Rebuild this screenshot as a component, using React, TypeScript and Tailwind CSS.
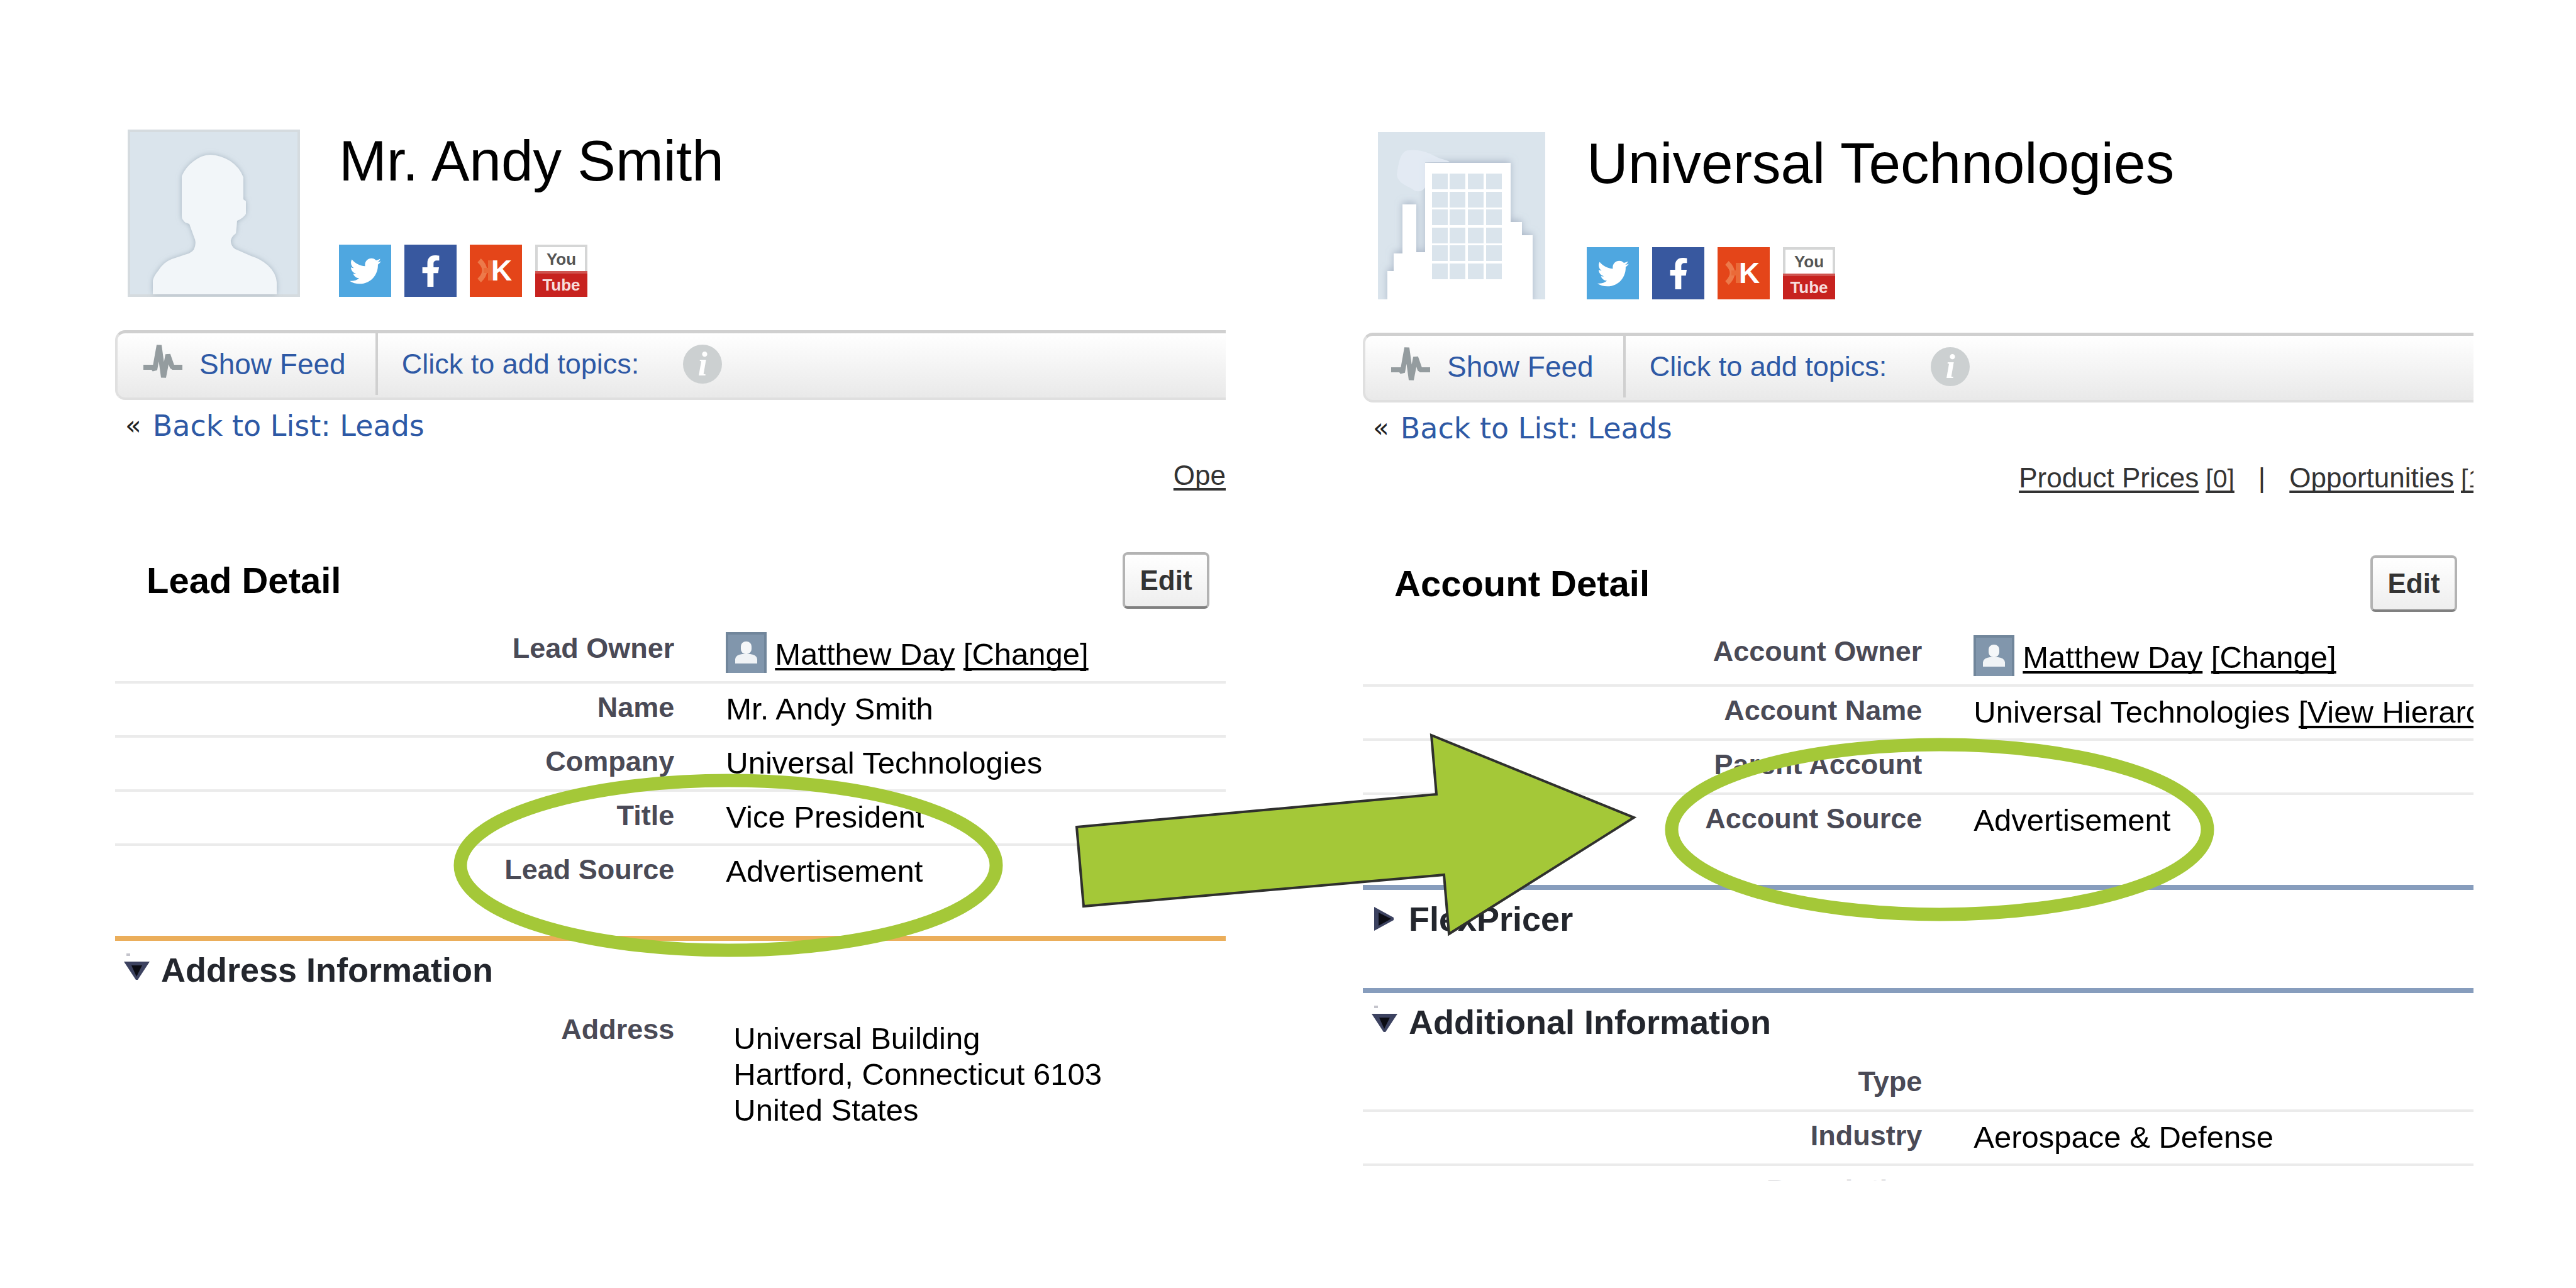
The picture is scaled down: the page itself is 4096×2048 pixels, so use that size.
import React from 'react';
import { FaFacebookF, FaTwitter } from 'react-icons/fa';

const PersonAvatar: React.FC = () => (
  <svg viewBox="0 0 274 266" className="w-[274px] h-[266px]" role="img" aria-label="Lead photo">
    <defs>
      <filter id="personShadow" x="-20%" y="-20%" width="140%" height="140%">
        <feDropShadow dx="0" dy="0" stdDeviation="4" floodColor="#8d9dac" floodOpacity="0.65" />
      </filter>
    </defs>
    <rect width="274" height="266" fill="#d5dbdf" />
    <rect x="4" y="4" width="266" height="258" fill="#dae4ec" />
    <path
      filter="url(#personShadow)"
      fill="#f2f6f9"
      d="M40 262 V240 Q42 232 49 224 Q57 211 70 206 L91 199 Q105 196 107 186 Q109 178 106 172 L98 150 L92 148 Q86 143 86 138 V74 Q92 60 104 51 Q118 40 132 40 Q148 41 163 50 Q178 60 184 76 V111 L188 114 V134 Q184 141 174 145 Q173 158 172 165 Q163 172 164 179 Q165 186 171 190 L196 201 Q212 206 223 216 Q236 228 237 243 V262 Z"
    />
  </svg>
);

const BuildingAvatar: React.FC = () => (
  <svg viewBox="0 0 266 266" className="w-[266px] h-[266px]" role="img" aria-label="Account photo">
    <defs>
      <filter id="buildingShadow" x="-20%" y="-20%" width="140%" height="140%">
        <feDropShadow dx="0" dy="-3" stdDeviation="6" floodColor="#8d9bb0" floodOpacity="0.6" />
      </filter>
      <clipPath id="buildingClip">
        <rect width="266" height="266" />
      </clipPath>
    </defs>
    <rect width="266" height="266" fill="#dae4ec" />
    <g clipPath="url(#buildingClip)">
      <path
        filter="url(#buildingShadow)"
        fill="#fff"
        d="M15 274 V221 H25 V193 H39 V115 H61 V191 H75 V49 H211 V143 H229 V164 H246 V274 Z"
      />
      <path fill="#e4ebf5" fillOpacity="0.85" d="M44 30 C58 26 76 30 90 38 C100 44 112 44 114 48 H75 V88 C70 96 60 96 54 90 C42 84 32 80 30 68 C32 54 34 36 44 30 Z" />
    </g>
    {[66, 95, 123, 152, 180, 209].map((y) =>
      [86, 114, 143, 172].map((x) => (
        <rect key={`${x}-${y}`} x={x} y={y} width="25" height="25" fill="#dae4ec" />
      ))
    )}
  </svg>
);

const OwnerIcon: React.FC = () => (
  <svg viewBox="0 0 65 65" className="w-[65px] h-[65px] shrink-0" aria-hidden="true">
    <rect width="65" height="65" fill="#71869b" />
    <rect x="4" y="4" width="57" height="61" fill="#8196ac" />
    <rect x="24" y="15" width="17" height="20" rx="8" fill="#f5f7f9" />
    <path d="M15 50 V43 Q16 36 26 35 H39 Q49 36 50 43 V50 Z" fill="#f0f3f6" />
  </svg>
);

const PulseIcon: React.FC = () => (
  <svg viewBox="0 0 62 70" className="w-[62px] h-[70px]" aria-hidden="true">
    <path
      d="M0 40 H15 L18 44 L25 5 L32 56 L39 20 L46 40 H62"
      fill="none"
      stroke="#949c9f"
      strokeWidth="8"
      strokeLinejoin="bevel"
    />
  </svg>
);

const KloutIcon: React.FC = () => (
  <svg viewBox="0 0 83 83" className="w-[83px] h-[83px]" aria-hidden="true">
    <path d="M15 25 Q32 41 15 57" fill="none" stroke="#ec7a4b" strokeWidth="8" />
    <path d="M33 25 V57 M22 41 H34" fill="none" stroke="#ea6a38" strokeWidth="8" />
    <text x="34" y="57" fontSize="46" fontWeight="700" fontFamily="Liberation Sans, sans-serif" fill="#fff">
      K
    </text>
  </svg>
);

const SocialLinks: React.FC = () => (
  <div className="flex gap-[21px]">
    <a href="#" aria-label="Twitter" className="w-[83px] h-[83px] bg-[#4fa7e0] text-white flex items-center justify-center">
      <FaTwitter className="w-[50px] h-[50px]" />
    </a>
    <a href="#" aria-label="Facebook" className="w-[83px] h-[83px] bg-[#38589f] text-white flex items-center justify-center">
      <FaFacebookF className="w-[50px] h-[50px]" />
    </a>
    <a href="#" aria-label="Klout" className="w-[83px] h-[83px] bg-[#e44519]">
      <KloutIcon />
    </a>
    <a href="#" aria-label="YouTube" className="w-[83px] h-[83px] flex flex-col text-center font-bold text-[26px]">
      <span className="h-[42px] bg-white border-4 border-b-0 border-[#d5d6d6] text-[#555] leading-[38px]">You</span>
      <span className="h-[41px] bg-[#c7221f] border-t-4 border-[#cf5450] text-[#f7dcdc] leading-[36px]">Tube</span>
    </a>
  </div>
);

type HeaderProps = { name: string; avatar: React.ReactNode };

const RecordHeader: React.FC<HeaderProps> = ({ name, avatar }) => (
  <header className="flex gap-[62px] pl-5">
    <div className="w-[274px] flex justify-center">{avatar}</div>
    <div className="flex flex-col justify-between">
      <h1 className="text-[91px] leading-[100px] text-black whitespace-nowrap">{name}</h1>
      <SocialLinks />
    </div>
  </header>
);

const FeedBar: React.FC = () => (
  <div className="mt-[53px] h-[111px] pb-1 flex items-center rounded-l-2xl border-t-[5px] border-b-4 border-l-4 border-t-[#d0d0d0] border-b-[#dfdfdf] border-l-[#e0e0e0] bg-linear-to-b from-white to-[#e9e9e9] text-[#2e59a5] whitespace-nowrap">
    <button type="button" className="h-full pl-[41px] pr-[47px] flex items-center gap-[27px] border-r-4 border-[#d0d0d0] text-[46px] leading-[52px]">
      <PulseIcon />
      Show Feed
    </button>
    <a href="#" className="ml-[38px] text-[45px] leading-[52px]">Click to add topics:</a>
    <button
      type="button"
      aria-label="Topics help"
      className="ml-[70px] w-[62px] h-[62px] rounded-full bg-[#ccd0d1] text-white text-[54px] leading-[58px] font-bold italic font-['Liberation_Serif',serif]"
    >
      i
    </button>
  </div>
);

const BackLink: React.FC = () => (
  <div className="mt-[14px] mb-[26px] pl-4 flex gap-[18px] text-[46px] leading-[54px] font-['DejaVu_Sans',sans-serif] whitespace-nowrap">
    <span className="text-[#222] text-[42px]">«</span>
    <a href="#" className="text-[#2e59a5]">Back to List: Leads</a>
  </div>
);

const linkClass = 'underline decoration-4 underline-offset-[5px] [text-decoration-skip-ink:none]';

const DetailTitle: React.FC<{ title: string }> = ({ title }) => (
  <div className="mt-24 mb-[25px] pl-[50px] pr-[26px] flex items-center justify-between">
    <h2 className="text-[58px] leading-[64px] font-bold text-black">{title}</h2>
    <button
      type="button"
      className="w-[138px] h-[90px] rounded-lg border-4 border-[#b3b3b3] border-b-[#808080] bg-linear-to-b from-white to-[#eeeeee] text-[44px] leading-[52px] font-bold text-[#333]"
    >
      Edit
    </button>
  </div>
);

type Field = { label: string; value?: React.ReactNode };

const FieldTable: React.FC<{ fields: Field[]; children?: React.ReactNode }> = ({ fields, children }) => (
  <table className="w-full table-fixed border-separate border-spacing-0">
    <tbody>
      {fields.map((field, i) => {
        const line = i < fields.length - 1 || children ? 'border-b-4 border-[#ebebeb]' : '';
        return (
          <tr key={field.label}>
            <th scope="row" className={`w-[55%] pt-3 pr-[82px] text-right align-top text-[45px] leading-[52px] font-bold text-[#4a4a56] ${line}`}>
              {field.label}
            </th>
            <td className={`pt-3 pb-[14px] align-top text-[49px] leading-[56px] text-black whitespace-nowrap ${line}`}>
              {field.value ?? <>&nbsp;</>}
            </td>
          </tr>
        );
      })}
      {children}
    </tbody>
  </table>
);

const Owner: React.FC = () => (
  <div className="-mb-px flex items-end gap-[13px] leading-[60px]">
    <OwnerIcon />
    <span>
      <a href="#" className={linkClass}>Matthew Day</a> <a href="#" className={linkClass}>[Change]</a>
    </span>
  </div>
);

type SectionTitleProps = { title: string; open?: boolean; className: string };

const SectionTitle: React.FC<SectionTitleProps> = ({ title, open = true, className }) => (
  <h3 className={`border-t-8 pt-4 text-[54px] leading-[60px] font-bold text-[#23262d] ${className}`}>
    <button type="button" aria-expanded={open} className="pl-[14px] flex items-center gap-[18px]">
      <svg viewBox="0 0 41 60" className="w-[41px] h-[60px]" aria-hidden="true">
        {open ? (
          <>
            <rect x="4" y="4" width="6" height="4" fill="#c4c4cc" />
            <path d="M0 17 H41 L22 46 H19 Z" fill="#3c4260" />
            <path d="M12 23 H29 L20 41 Z" fill="#0b0c14" />
          </>
        ) : (
          <>
            <path d="M4 11 L35 28 V32 L4 49 Z" fill="#3c4260" />
            <path d="M11 20 L31 30 L11 41 Z" fill="#0b0c14" />
          </>
        )}
      </svg>
      {title}
    </button>
  </h3>
);

const leadFields: Field[] = [
  { label: 'Lead Owner', value: <Owner /> },
  { label: 'Name', value: 'Mr. Andy Smith' },
  { label: 'Company', value: 'Universal Technologies' },
  { label: 'Title', value: 'Vice President' },
  { label: 'Lead Source', value: 'Advertisement' },
];

const addressFields: Field[] = [
  {
    label: 'Address',
    value: (
      <div className="pt-3 pl-3 leading-[57px]">
        Universal Building
        <br />
        Hartford, Connecticut 6103
        <br />
        United States
      </div>
    ),
  },
];

const accountFields: Field[] = [
  { label: 'Account Owner', value: <Owner /> },
  {
    label: 'Account Name',
    value: (
      <>
        Universal Technologies <a href="#" className={linkClass}>[View Hierarc</a>
      </>
    ),
  },
  { label: 'Parent Account' },
  { label: 'Account Source', value: 'Advertisement' },
];

const additionalFields: Field[] = [
  { label: 'Type' },
  { label: 'Industry', value: 'Aerospace & Defense' },
];

const LeadPanel: React.FC = () => (
  <section className="flex-1 min-w-0 overflow-hidden pt-[206px]">
    <RecordHeader name="Mr. Andy Smith" avatar={<PersonAvatar />} />
    <FeedBar />
    <BackLink />
    <nav className="flex justify-end text-[44px] leading-[52px] text-[#333]">
      <a href="#" className={linkClass}>Ope</a>
    </nav>
    <DetailTitle title="Lead Detail" />
    <FieldTable fields={leadFields} />
    <SectionTitle title="Address Information" className="mt-[61px] mb-[27px] border-[#ebae5b]" />
    <FieldTable fields={addressFields} />
  </section>
);

const AccountPanel: React.FC = () => (
  <section className="flex-1 min-w-0 overflow-hidden pt-[210px]">
    <RecordHeader name="Universal Technologies" avatar={<BuildingAvatar />} />
    <FeedBar />
    <BackLink />
    <nav className="flex justify-end items-baseline text-[44px] leading-[52px] text-[#333] whitespace-nowrap">
      <a href="#" className={linkClass}>Product Prices</a>
      <a href="#" className={`ml-[11px] text-[41px] ${linkClass}`}>[0]</a>
      <span className="mx-[38px]">|</span>
      <a href="#" className={linkClass}>Opportunities</a>
      <a href="#" className={`ml-[11px] w-5 overflow-x-clip text-[41px] ${linkClass}`}>[1</a>
    </nav>
    <DetailTitle title="Account Detail" />
    <FieldTable fields={accountFields} />
    <SectionTitle title="FlexPricer" open={false} className="mt-[61px] mb-20 border-[#879dbd]" />
    <SectionTitle title="Additional Information" className="mb-[27px] border-[#879dbd]" />
    <FieldTable fields={additionalFields}>
      <tr>
        <th scope="row" className="w-[55%] pt-3 pr-[82px] text-right align-top text-[45px] leading-[52px] font-bold text-[#e6e6e8]">
          <div className="h-3 overflow-hidden">Description</div>
        </th>
        <td></td>
      </tr>
    </FieldTable>
  </section>
);

// Green arrow and rings that link the lead source to the account source
const Callouts: React.FC = () => (
  <svg viewBox="0 0 4096 2048" className="absolute inset-0 w-full h-full pointer-events-none" aria-hidden="true">
    <ellipse cx="1158" cy="1376" rx="426" ry="135" fill="none" stroke="#a4c838" strokeWidth="21" />
    <ellipse cx="3084" cy="1319" rx="426" ry="135" fill="none" stroke="#a4c838" strokeWidth="21" />
    <path
      d="M1712 1315 L2284 1263 L2276 1169 L2598 1300 L2304 1485 L2296 1391 L1723 1441 Z"
      fill="#a4c838"
      stroke="#2f302d"
      strokeWidth="4"
    />
  </svg>
);

const App: React.FC = () => {
  return (
    <main className="relative min-h-screen bg-white pl-[183px] pr-[163px] flex items-start gap-[218px] overflow-hidden font-['Liberation_Sans',Arial,sans-serif]">
      <LeadPanel />
      <AccountPanel />
      <Callouts />
    </main>
  );
};

export default App;
